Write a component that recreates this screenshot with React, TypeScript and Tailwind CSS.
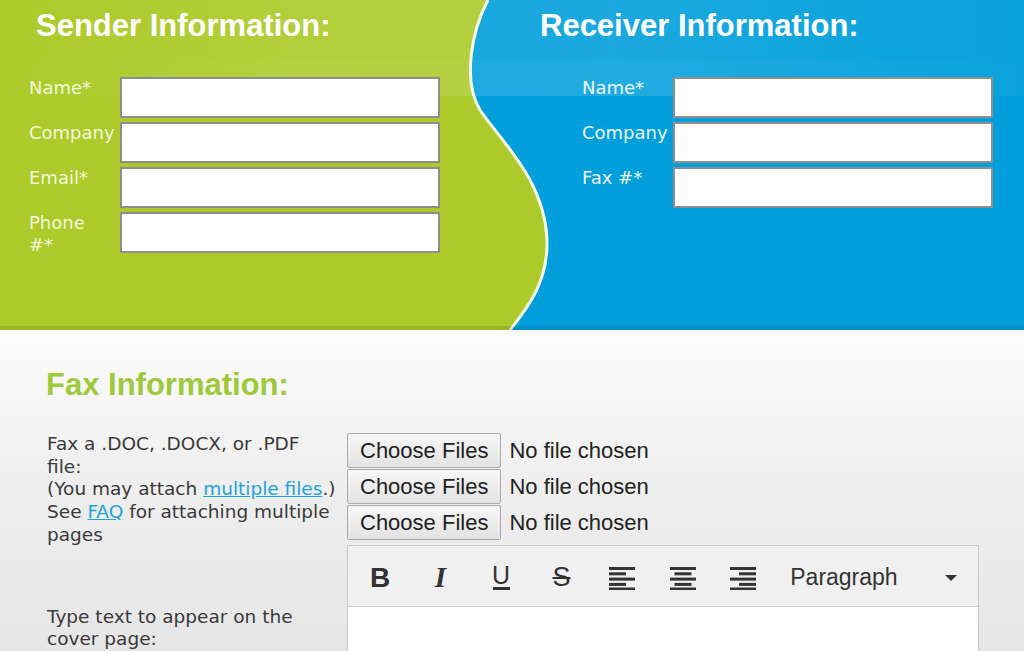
import React from "react";

const sans = "font-['Liberation_Sans',Arial,sans-serif]";
const verdana = "font-['DejaVu_Sans',Verdana,sans-serif]";

function Row({ label, tone }: { label: React.ReactNode; tone: "green" | "blue" }) {
  return (
    <div className="flex items-start mb-[4px]">
      <div
        className={`w-[91px] shrink-0 text-[18px] leading-[22px] ${verdana} ${
          tone === "green" ? "text-[#f2f7dc]" : "text-[#ecf6fc]"
        }`}
      >
        {label}
      </div>
      <input
        type="text"
        className="w-[320px] h-[41px] bg-white border-2 border-[#8e8e8e] outline-none"
      />
    </div>
  );
}

function AlignIcon({ kind }: { kind: "left" | "center" | "right" }) {
  const x = kind === "left" ? 0 : kind === "center" ? 4.5 : 9;
  return (
    <svg width="26" height="24" viewBox="0 0 26 24" fill="#333">
      <rect x="0" y="1" width="26" height="3" />
      <rect x={x} y="6.3" width="17" height="3" />
      <rect x="0" y="11.6" width="26" height="3" />
      <rect x={x} y="16.9" width="17" height="3" />
      <rect x="0" y="21.5" width="26" height="3" />
    </svg>
  );
}

function FileRow() {
  return (
    <div className={`flex items-center mb-[1px] ${sans}`}>
      <button className="h-[35px] px-[12px] text-[22px] text-[#222] border border-[#a9a9a9] rounded-[2px] bg-gradient-to-b from-[#f7f7f7] to-[#e3e3e3]">
        Choose Files
      </button>
      <span className="ml-[8px] text-[22px] text-[#222]">No file chosen</span>
    </div>
  );
}

export default function App() {
  return (
    <div className="w-[1024px] h-[651px] overflow-hidden bg-[#e8e8e8]">
      {/* header with the wave */}
      <div className="relative h-[330px] bg-[#009fdb] overflow-hidden">
        <svg
          className="absolute inset-0"
          width="1024"
          height="330"
          viewBox="0 0 1024 330"
          preserveAspectRatio="none"
        >
          <defs>
            <linearGradient id="shine" x1="0" y1="0" x2="1" y2="0">
              <stop offset="0" stopColor="#fff" stopOpacity="0" />
              <stop offset="0.3" stopColor="#fff" stopOpacity="0.1" />
              <stop offset="0.6" stopColor="#fff" stopOpacity="0.13" />
              <stop offset="1" stopColor="#fff" stopOpacity="0.04" />
            </linearGradient>
          </defs>
          <path
            d="M0,0 L488,0 C472,30 462,80 480,110 C500,140 545,180 547,240 C548,280 530,305 510,330 L0,330 Z"
            fill="#adca2a"
          />
          <path d="M0,60 L1024,60 L1024,96 L0,96 Z" fill="url(#shine)" />
          <path d="M0,0 L1024,0 L1024,60 L0,60 Z" fill="url(#shine)" opacity="0.8" />
          <path
            d="M488,0 C472,30 462,80 480,110 C500,140 545,180 547,240 C548,280 530,305 510,330"
            fill="none"
            stroke="#f6fbe8"
            strokeWidth="3"
          />
          <rect x="0" y="326" width="1024" height="4" fill="#000" opacity="0.1" />
        </svg>

        <div className="relative grid grid-cols-[540px_1fr]">
          <div>
            <h2 className={`pl-[36px] pt-[10px] text-[31px] leading-[31px] font-bold text-white ${sans}`}>
              Sender Information:
            </h2>
            <div className="pl-[29px] mt-[36px]">
              <Row label="Name*" tone="green" />
              <Row label="Company" tone="green" />
              <Row label="Email*" tone="green" />
              <Row
                label={
                  <>
                    Phone
                    <br />
                    #*
                  </>
                }
                tone="green"
              />
            </div>
          </div>
          <div>
            <h2 className={`pt-[10px] text-[31px] leading-[31px] font-bold text-white ${sans}`}>
              Receiver Information:
            </h2>
            <div className="pl-[42px] mt-[36px]">
              <Row label="Name*" tone="blue" />
              <Row label="Company" tone="blue" />
              <Row label="Fax #*" tone="blue" />
            </div>
          </div>
        </div>
      </div>

      {/* fax information */}
      <div className="h-[321px] bg-gradient-to-b from-[#fcfcfc] via-[#eeeeee] to-[#e6e6e6] pl-[46px] pt-[39px]">
        <h2 className={`text-[31px] leading-[31px] font-bold text-[#9dc93a] ${sans}`}>
          Fax Information:
        </h2>
        <div className="mt-[33px] grid grid-cols-[301px_1fr]">
          <div className={`pl-[1px] text-[18.5px] leading-[22.7px] text-[#3a3a3a] ${verdana}`}>
            <div className="whitespace-nowrap">Fax a .DOC, .DOCX, or .PDF</div>
            <div>file:</div>
            <div className="whitespace-nowrap">
              (You may attach{" "}
              <a href="#" className="text-[#1fa3db] underline">
                multiple files
              </a>
              .)
            </div>
            <div className="whitespace-nowrap">
              See{" "}
              <a href="#" className="text-[#1fa3db] underline">
                FAQ
              </a>{" "}
              for attaching multiple
            </div>
            <div>pages</div>
            <div className="mt-[59px]">
              Type text to appear on the
              <br />
              cover page:
            </div>
          </div>

          <div>
            <FileRow />
            <FileRow />
            <FileRow />
            <div className="mt-[5px] w-[632px] border border-[#c9c9c9] bg-white">
              <div className="h-[61px] pt-[3px] bg-[#f0f0f0] border-b border-[#cfcfcf] flex items-center pl-[1.75px] text-[#333]">
                <div className="w-[60.5px] flex justify-center">
                  <span className={`text-[28px] font-bold leading-none ${sans}`}>B</span>
                </div>
                <div className="w-[60.5px] flex justify-center">
                  <span className="text-[29px] font-bold italic leading-none font-['Liberation_Serif',serif]">
                    I
                  </span>
                </div>
                <div className="w-[60.5px] flex justify-center">
                  <span className={`flex flex-col items-center ${sans}`}>
                    <span className="text-[25px] leading-[21px]">U</span>
                    <span className="w-[17px] h-[3px] bg-[#333] mt-[1px]" />
                  </span>
                </div>
                <div className="w-[60.5px] flex justify-center">
                  <span className={`text-[27px] leading-none line-through ${sans}`}>S</span>
                </div>
                <div className="w-[60.5px] flex justify-center">
                  <AlignIcon kind="left" />
                </div>
                <div className="w-[60.5px] flex justify-center">
                  <AlignIcon kind="center" />
                </div>
                <div className="w-[60.5px] flex justify-center">
                  <AlignIcon kind="right" />
                </div>
                <span className={`ml-[17px] text-[23px] text-[#333] ${sans}`}>Paragraph</span>
                <span className="ml-auto mr-[21px] w-0 h-0 border-l-[6px] border-r-[6px] border-t-[6px] border-l-transparent border-r-transparent border-t-[#333]" />
              </div>
              <div className="h-[200px]" />
            </div>
          </div>
        </div>
      </div>
    </div>
  );
}
